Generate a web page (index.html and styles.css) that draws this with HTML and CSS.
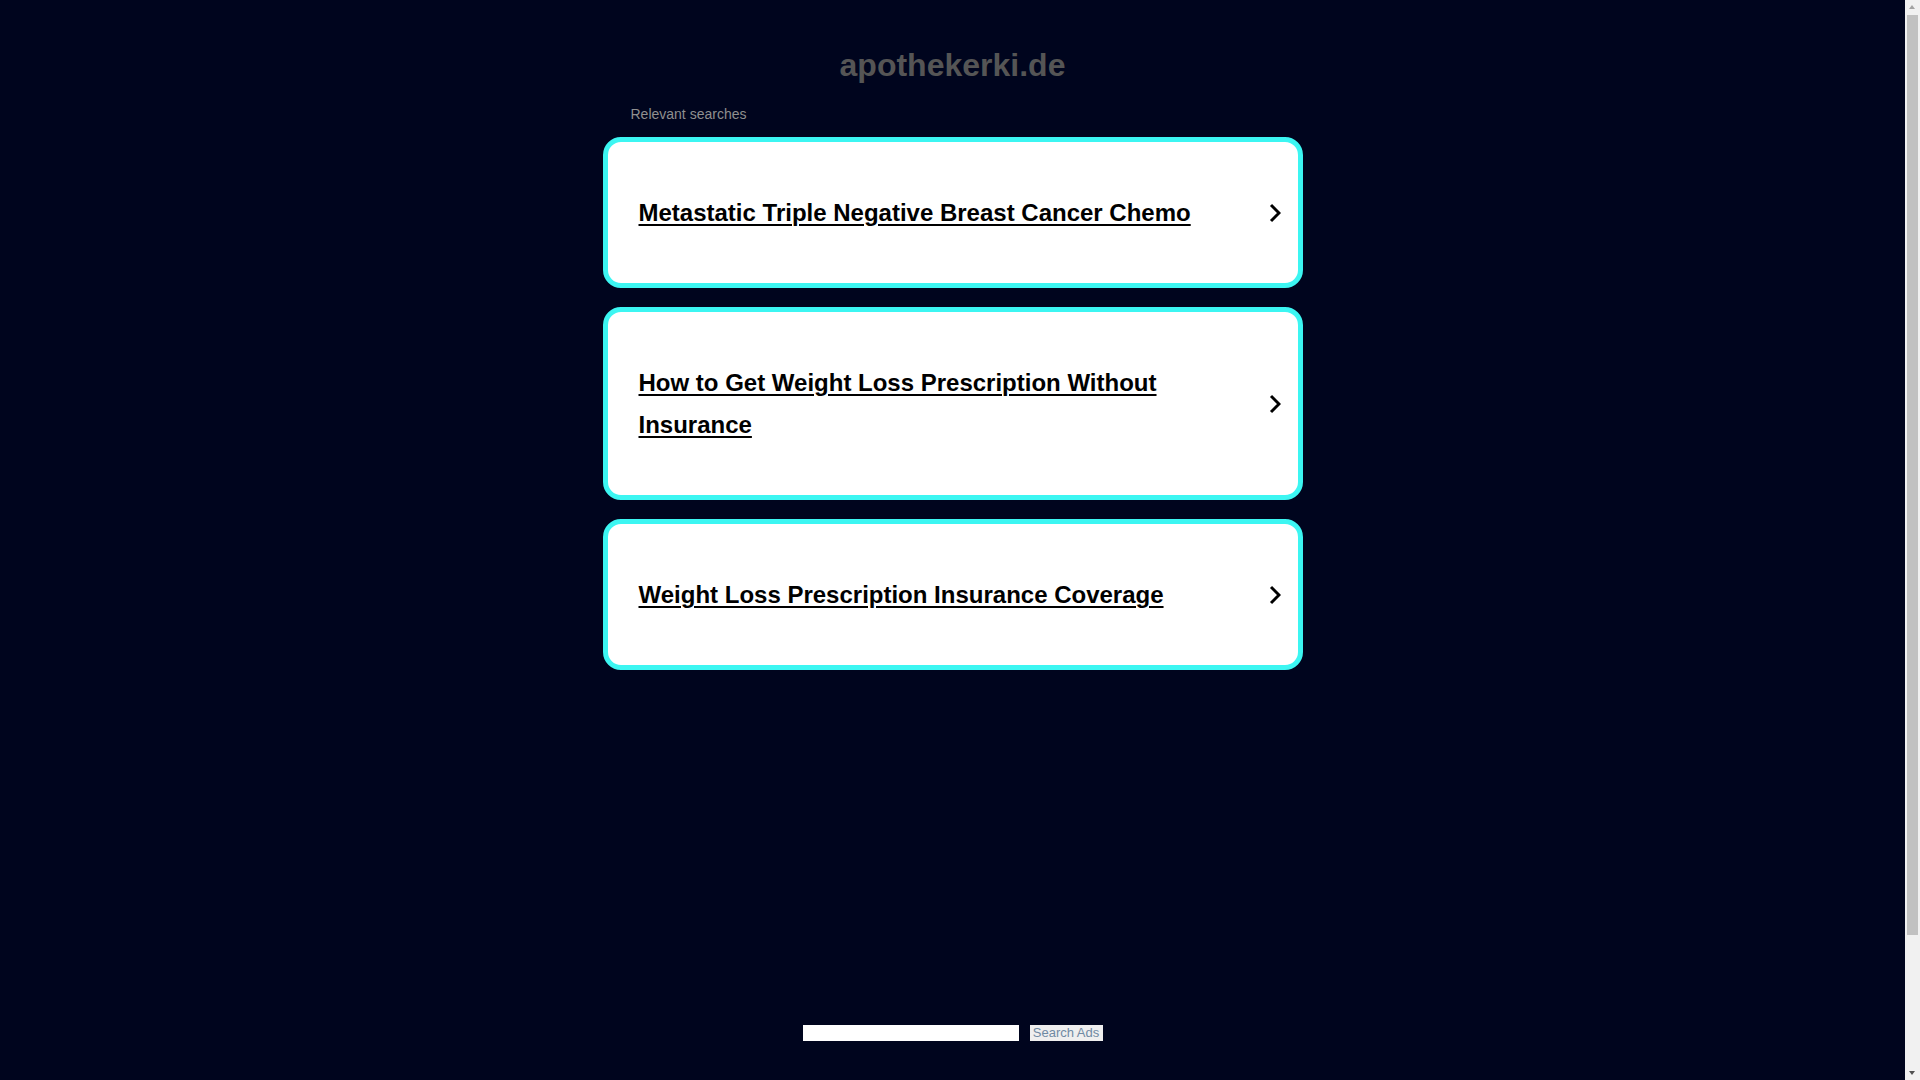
FILE: index.html
```html
<!DOCTYPE html>
<html lang="en">
<head>
<meta charset="utf-8">
<title>apothekerki.de</title>
<link rel="stylesheet" href="styles.css">
</head>
<body>
<div class="page">
  <h1 class="title">apothekerki.de</h1>
  <div class="container">
    <div class="label">Relevant searches</div>
    <div class="cards">
      <a class="card" href="#">
        <span class="card-text">Metastatic Triple Negative Breast Cancer Chemo</span>
        <svg class="chev" viewBox="0 0 12 20" width="12" height="20"><path d="M2 2 L10 10 L2 18" fill="none" stroke="#000" stroke-width="3"/></svg>
      </a>
      <a class="card" href="#">
        <span class="card-text">How to Get Weight Loss Prescription Without Insurance</span>
        <svg class="chev" viewBox="0 0 12 20" width="12" height="20"><path d="M2 2 L10 10 L2 18" fill="none" stroke="#000" stroke-width="3"/></svg>
      </a>
      <a class="card" href="#">
        <span class="card-text">Weight Loss Prescription Insurance Coverage</span>
        <svg class="chev" viewBox="0 0 12 20" width="12" height="20"><path d="M2 2 L10 10 L2 18" fill="none" stroke="#000" stroke-width="3"/></svg>
      </a>
    </div>
  </div>
  <div class="search">
    <input class="search-input" type="text">
    <button class="search-btn" type="button">Search Ads</button>
  </div>
</div>
<div class="scrollbar">
  <div class="sb-arrow sb-up"></div>
  <div class="sb-thumb"></div>
  <div class="sb-arrow sb-down"></div>
</div>
</body>
</html>
```

FILE: styles.css
```css
html, body {
  margin: 0;
  padding: 0;
  background: #00051e;
}
body {
  font-family: "Liberation Sans", Arial, sans-serif;
  min-height: 1228px;
}
.page {
  display: flex;
  flex-direction: column;
  align-items: center;
  margin-right: 15px;
}
.title {
  margin: 47px 0 0 0;
  font-size: 32px;
  line-height: 37px;
  font-weight: bold;
  color: #555555;
  text-align: center;
}
.container {
  width: 700px;
  margin-top: 22px;
}
.label {
  font-size: 14px;
  line-height: 16px;
  color: #8f8f8f;
  padding-left: 28px;
  margin-bottom: 15px;
}
.cards {
  display: flex;
  flex-direction: column;
  gap: 19px;
}
.card {
  display: flex;
  align-items: center;
  justify-content: space-between;
  background: #ffffff;
  border: 5px solid #3cf6f2;
  border-radius: 18px;
  padding: 50px 17px 49px 31px;
  text-decoration: none;
  color: #000;
}
.card-text {
  font-size: 24px;
  line-height: 42px;
  font-weight: bold;
  color: #000;
  text-decoration: underline;
  text-decoration-thickness: 2px;
  text-underline-offset: 3px;
  max-width: 560px;
}
.chev {
  display: block;
  flex: none;
}
.search {
  display: flex;
  gap: 11px;
  margin-top: 355px;
}
.search-input {
  width: 216px;
  height: 16px;
  box-sizing: border-box;
  border: none;
  padding: 0;
  margin: 0;
  background: #fff;
}
.search-btn {
  width: 73px;
  height: 16px;
  box-sizing: border-box;
  border: none;
  padding: 0;
  margin: 0;
  background: #efefef;
  color: #6f8aa3;
  font-family: "Liberation Sans", Arial, sans-serif;
  font-size: 13px;
  line-height: 16px;
}
.scrollbar {
  position: fixed;
  top: 0;
  right: 0;
  width: 15px;
  height: 100vh;
  background: #f1f1f1;
}
.sb-thumb {
  position: absolute;
  left: 2px;
  right: 2px;
  top: 15px;
  height: 920px;
  background: #c1c1c1;
}
.sb-arrow {
  position: absolute;
  left: 4px;
  width: 0;
  height: 0;
  border-left: 3.5px solid transparent;
  border-right: 3.5px solid transparent;
}
.sb-up {
  top: 5px;
  border-bottom: 4px solid #a3a3a3;
}
.sb-down {
  bottom: 5px;
  border-top: 4px solid #505050;
}
```
